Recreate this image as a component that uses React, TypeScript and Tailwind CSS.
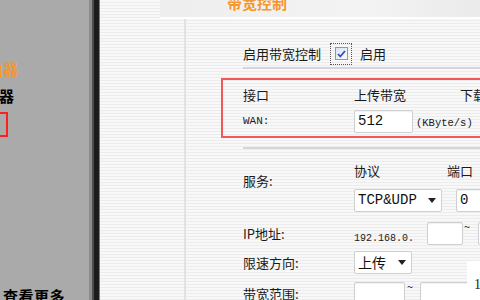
import React from "react";

const STRIPES =
  "bg-[repeating-linear-gradient(180deg,#f8f8f8_0px,#f8f8f8_2px,#ececec_2px,#ececec_3px)]";

const MONO = "font-[family-name:Liberation_Mono,monospace]";

const Caret = () => (
  <svg width="8" height="5" viewBox="0 0 8 5" className="shrink-0">
    <path d="M0 0h8L4 5z" fill="#222" />
  </svg>
);

const Field = ({ w, children }: { w: string; children?: React.ReactNode }) => (
  <div
    className={`${w} h-[23px] shrink-0 bg-white border border-[#cfcfcf] rounded-[2px] shadow-[inset_0_1px_1px_rgba(0,0,0,0.06)] flex items-center px-[3px] font-[family-name:Liberation_Mono,monospace] text-[14px] text-[#111]`}
  >
    {children}
  </div>
);

const Select = ({ w, children }: { w: string; children: React.ReactNode }) => (
  <div
    className={`${w} h-[23px] shrink-0 bg-white border border-[#cfcfcf] rounded-[2px] flex items-center justify-between pl-[3px] pr-[5px] text-[14px] text-[#111]`}
  >
    {children}
    <Caret />
  </div>
);

export default function App() {
  return (
    <div className="relative w-[480px] h-[300px] overflow-hidden flex font-[family-name:Noto_Sans_CJK_SC,Noto_Sans,sans-serif] text-[#1a1a1a]">
      {/* left nav */}
      <aside className="w-[89px] shrink-0 bg-[#aaaaaa] flex flex-col overflow-hidden">
        <div className="mt-[60px] -ml-[12px] text-[15px] leading-[18px] font-bold text-[#f5962e] whitespace-nowrap">
          由器
        </div>
        <div className="mt-[9px] -ml-[16px] text-[15px] leading-[18px] font-bold text-black whitespace-nowrap">
          由器
        </div>
        <div className="mt-[7px] -ml-[40px] w-[48px] h-[25px] border-2 border-[#ff1f1f] shrink-0" />
        <div className="mt-auto -mb-[6px] ml-[3px] text-[15px] leading-[20px] font-bold text-black whitespace-nowrap tracking-[0.5px]">
          查看更多
        </div>
      </aside>

      {/* frame edge */}
      <div className="w-[11px] shrink-0 bg-[linear-gradient(90deg,#8c8c8c_0px,#8c8c8c_3px,#4e4e4e_3px,#4e4e4e_5px,#1b1b1b_5px,#1b1b1b_10px,#808080_10px)]" />

      {/* main */}
      <main className={`flex-1 flex flex-col ${STRIPES}`}>
        <div className="ml-[60px] h-[19px] shrink-0 border-b-2 border-white bg-[linear-gradient(90deg,#eeeeee,#f3f3f3_60%,#e8e8e8)] pl-[67px] overflow-hidden">
          <div className="-mt-[7px] text-[15px] leading-[20px] font-bold text-[#f5962e]">带宽控制</div>
        </div>

        <div className="flex-1 flex">
          <div className="w-[84px] shrink-0" />
          <div className="flex-1 border-l-2 border-[#e2e2e2] pl-[35px] flex flex-col text-[13px]">
            {/* enable */}
            <div className="mt-[24px] ml-[22px] h-[21px] flex items-center whitespace-nowrap">
              <span className="w-[87px]">启用带宽控制</span>
              <div className="w-[22px] h-[22px] border border-dotted border-[#555] flex items-center justify-center">
                <div className="w-[13px] h-[13px] border border-[#7f9db9] bg-[linear-gradient(135deg,#dce4f0,#f8fafc)] flex items-center justify-center">
                  <svg width="9" height="8" viewBox="0 0 9 8">
                    <path d="M1 4l2.3 2.5L8 1" stroke="#2e4fc4" strokeWidth="1.8" fill="none" />
                  </svg>
                </div>
              </div>
              <span className="ml-[8px]">启用</span>
            </div>

            <div className="mt-[3px] ml-[22px] h-[2px] bg-[#d6d6d6] shrink-0" />

            {/* interface box */}
            <div className="mt-[9px] h-[60px] shrink-0 border-2 border-r-0 border-[#f25858] pl-[20px] flex flex-col">
              <div className="mt-[7px] h-[16px] flex items-center whitespace-nowrap">
                <span className="w-[111px]">接口</span>
                <span className="w-[106px]">上传带宽</span>
                <span>下载</span>
              </div>
              <div className="mt-[7px] h-[23px] flex items-center whitespace-nowrap">
                <span className={`w-[111px] ${MONO} text-[11px]`}>WAN:</span>
                <Field w="w-[59px]">512</Field>
                <span className={`ml-[3px] mt-[4px] ${MONO} text-[10.5px]`}>(KByte/s)</span>
              </div>
            </div>

            <div className="mt-[9px] ml-[22px] h-[2px] bg-[#d6d6d6] shrink-0" />

            {/* service */}
            <div className="ml-[22px] flex items-center whitespace-nowrap">
              <span className="w-[111px]">服务:</span>
              <div className="flex flex-col">
                <div className="mt-[14px] h-[16px] flex items-center">
                  <span className="w-[93px]">协议</span>
                  <span>端口</span>
                </div>
                <div className="mt-[10px] flex items-center">
                  <Select w="w-[88px]">
                    <span className={`${MONO} text-[14px]`}>TCP&amp;UDP</span>
                  </Select>
                  <div className="ml-[14px]">
                    <Field w="w-[40px]">0</Field>
                  </div>
                </div>
              </div>
            </div>

            {/* ip */}
            <div className="mt-[10px] ml-[22px] h-[23px] flex items-center whitespace-nowrap">
              <span className="w-[111px]">IP地址:</span>
              <span className={`w-[73px] mt-[10px] ${MONO} text-[10px]`}>192.168.0.</span>
              <Field w="w-[36px]" />
              <span className="w-[15px] -mt-[14px] pl-[1px] text-[11px]">~</span>
              <Field w="w-[30px]" />
            </div>

            {/* direction */}
            <div className="mt-[6px] ml-[22px] h-[23px] flex items-center whitespace-nowrap">
              <span className="w-[111px]">限速方向:</span>
              <Select w="w-[58px]">
                <span className="text-[14px]">上传</span>
              </Select>
            </div>

            {/* range */}
            <div className="mt-[8px] ml-[22px] h-[23px] flex items-center whitespace-nowrap">
              <span className="w-[111px]">带宽范围:</span>
              <Field w="w-[51px]" />
              <span className="w-[15px] -mt-[14px] pl-[2px] text-[11px]">~</span>
              <Field w="w-[50px]" />
            </div>
          </div>
        </div>
      </main>

      {/* overlay box at right edge */}
      <div className="absolute left-[467px] top-[261px] w-[20px] h-[45px] bg-white pl-[7px] pt-[16px] font-[family-name:Liberation_Serif,serif] text-[14px] leading-[16px] text-[#222]">
        1
      </div>
    </div>
  );
}
